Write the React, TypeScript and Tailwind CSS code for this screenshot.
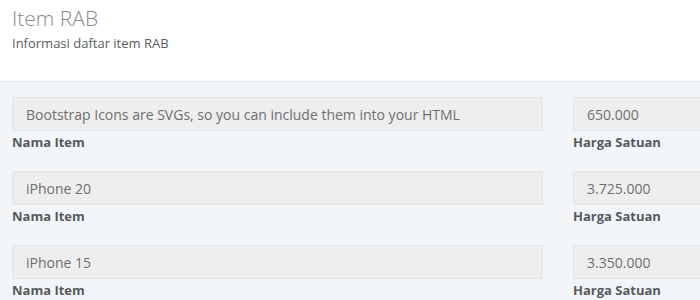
import React from "react";

interface RabItem {
  name: string;
  price: string;
}

const items: RabItem[] = [
  { name: "Bootstrap Icons are SVGs, so you can include them into your HTML", price: "650.000" },
  { name: "iPhone 20", price: "3.725.000" },
  { name: "iPhone 15", price: "3.350.000" },
];

const Field: React.FC<{ value: string; label: string; className: string }> = ({ value, label, className }) => (
  <div className={className}>
    <div className="h-[34px] flex items-center px-[13px] bg-[#eeeeee] border border-[#e6e6e6] rounded-[2px] text-[14px] text-[#6e6e6e] whitespace-nowrap overflow-hidden">
      {value}
    </div>
    <div className="mt-[3px] text-[13px] leading-[17px] font-bold text-[#555a5e]">{label}</div>
  </div>
);

const App: React.FC = () => {
  return (
    <div className="w-[700px] h-[300px] overflow-hidden bg-[#f3f6f9] font-['Open_Sans',sans-serif]">
      <div className="bg-white border-b border-[#e4e9ee] h-[82px] px-3 pt-[4px]">
        <h1 className="text-[21px] leading-[29px] font-light text-[#8a8a8a]">Item RAB</h1>
        <p className="text-[13px] leading-[17px] text-[#5c5c5c] mt-[2px]">Informasi daftar item RAB</p>
      </div>

      <div className="px-3 pt-[15px] flex flex-col gap-[20px]">
        {items.map((item) => (
          <div key={item.name} className="flex gap-[30px]">
            <Field value={item.name} label="Nama Item" className="w-[531px] shrink-0" />
            <Field value={item.price} label="Harga Satuan" className="w-[180px] shrink-0" />
          </div>
        ))}
      </div>
    </div>
  );
};

export default App;
